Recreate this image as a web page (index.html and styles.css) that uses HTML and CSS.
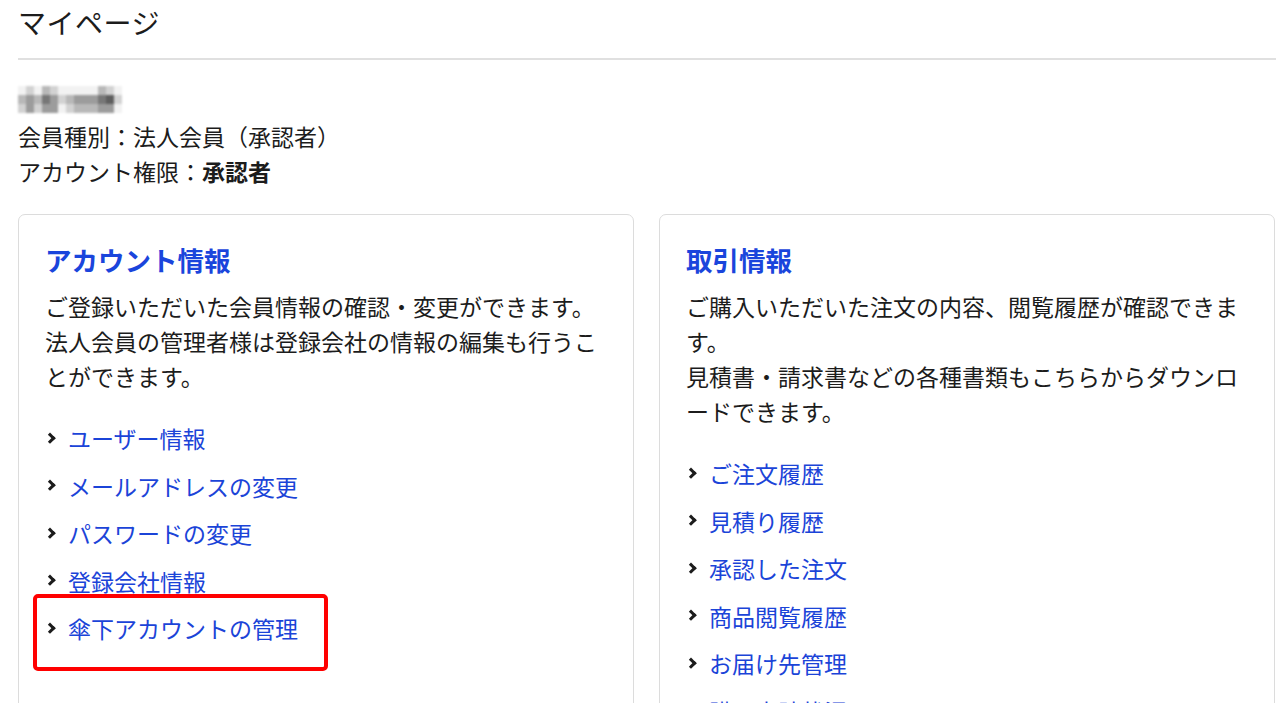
FILE: index.html
```html
<!DOCTYPE html>
<html lang="ja">
<head>
<meta charset="utf-8">
<title>マイページ</title>
<link rel="stylesheet" href="styles.css">
</head>
<body>
<div class="page">
  <h1 class="page-title">マイページ</h1>
  <hr class="rule">
  <div class="info">
    <div class="name-row" aria-label="氏名（ぼかし）">
      <span class="mosaic">
        <i class="c0"></i><i class="c1"></i><i class="c0"></i><i class="c2"></i><i class="c1"></i><i class="c0"></i><i class="c0"></i><i class="c0"></i><i class="c0"></i><i class="c0"></i><i class="c2"></i><i class="c1"></i><i class="c0"></i>
        <i class="c2"></i><i class="c3"></i><i class="c2"></i><i class="c4"></i><i class="c3"></i><i class="c1"></i><i class="c2"></i><i class="c3"></i><i class="c3"></i><i class="c3"></i><i class="c4"></i><i class="c5"></i><i class="c1"></i>
        <i class="c1"></i><i class="c3"></i><i class="c1"></i><i class="c3"></i><i class="c3"></i><i class="c0"></i><i class="c1"></i><i class="c2"></i><i class="c2"></i><i class="c2"></i><i class="c3"></i><i class="c3"></i><i class="c0"></i>
      </span>
    </div>
    <div class="info-row">会員種別：法人会員（承認者）</div>
    <div class="info-row">アカウント権限：<strong>承認者</strong></div>
  </div>

  <div class="cards">
    <section class="card">
      <h2 class="card-title">アカウント情報</h2>
      <p class="card-desc">ご登録いただいた会員情報の確認・変更ができます。法人会員の管理者様は登録会社の情報の編集も行うことができます。</p>
      <ul class="links">
        <li><a href="#">ユーザー情報</a></li>
        <li><a href="#">メールアドレスの変更</a></li>
        <li><a href="#">パスワードの変更</a></li>
        <li><a href="#">登録会社情報</a></li>
        <li class="marked"><a href="#">傘下アカウントの管理</a><span class="highlight"></span></li>
      </ul>
    </section>
    <section class="card">
      <h2 class="card-title">取引情報</h2>
      <p class="card-desc">ご購入いただいた注文の内容、閲覧履歴が確認できます。<br>見積書・請求書などの各種書類もこちらからダウンロードできます。</p>
      <ul class="links">
        <li><a href="#">ご注文履歴</a></li>
        <li><a href="#">見積り履歴</a></li>
        <li><a href="#">承認した注文</a></li>
        <li><a href="#">商品閲覧履歴</a></li>
        <li><a href="#">お届け先管理</a></li>
        <li><a href="#">購入申請状況</a></li>
      </ul>
    </section>
  </div>
</div>
</body>
</html>
```
FILE: styles.css
```css
* { box-sizing: border-box; }

html, body {
  margin: 0;
  padding: 0;
  background: #ffffff;
}

body {
  font-family: "Noto Sans CJK JP", "Noto Sans", "Liberation Sans", sans-serif;
  color: #1c1c1c;
  font-size: 23px;
}

.page {
  margin-left: 18px;
  width: 1258px;
}

.page-title {
  margin: 2px 0 0;
  font-size: 28px;
  font-weight: 400;
  line-height: 40px;
  letter-spacing: 0.5px;
}

.rule {
  margin: 16px 0 0;
  border: 0;
  height: 2px;
  background: #e0e0e0;
}

.info {
  margin-top: 19px;
}

.name-row {
  height: 40px;
  display: flex;
  align-items: center;
}

.mosaic {
  display: grid;
  grid-template-columns: repeat(13, 8px);
  grid-auto-rows: 9px;
  filter: blur(0.8px);
}

.mosaic i { display: block; }
.mosaic .c0 { background: #f2f2f2; }
.mosaic .c1 { background: #d2d2d2; }
.mosaic .c2 { background: #b8b8b8; }
.mosaic .c3 { background: #9c9c9c; }
.mosaic .c4 { background: #777777; }
.mosaic .c5 { background: #5e5e5e; }

.info-row {
  line-height: 35px;
}

.info-row strong {
  font-weight: 700;
}

.cards {
  margin-top: 25px;
  display: grid;
  grid-template-columns: 616px 616px;
  column-gap: 25px;
  align-items: stretch;
}

.card {
  border: 1px solid #dcdcdc;
  border-radius: 7px;
  padding: 27px 27px 40px 26px;
  min-height: 520px;
}

.card-title {
  margin: 0;
  font-size: 26.5px;
  line-height: 36px;
  font-weight: 700;
  color: #1a45dc;
}

.card-desc {
  margin: 11px 0 0;
  line-height: 35px;
}

.links {
  list-style: none;
  margin: 21px 0 0;
  padding: 0;
}

.links li {
  position: relative;
  line-height: 47.5px;
  padding-left: 23px;
}

.links li::before {
  content: "";
  position: absolute;
  left: 1px;
  top: 50%;
  width: 5px;
  height: 5px;
  border-top: 3px solid #1c1c1c;
  border-right: 3px solid #1c1c1c;
  transform: translateY(-60%) rotate(45deg);
}

.links a {
  color: #1b44d8;
  text-decoration: none;
}

.highlight {
  position: absolute;
  left: -12px;
  top: -11px;
  width: 295px;
  height: 77px;
  border: 4px solid #ff0000;
  border-radius: 5px;
  pointer-events: none;
}
```
